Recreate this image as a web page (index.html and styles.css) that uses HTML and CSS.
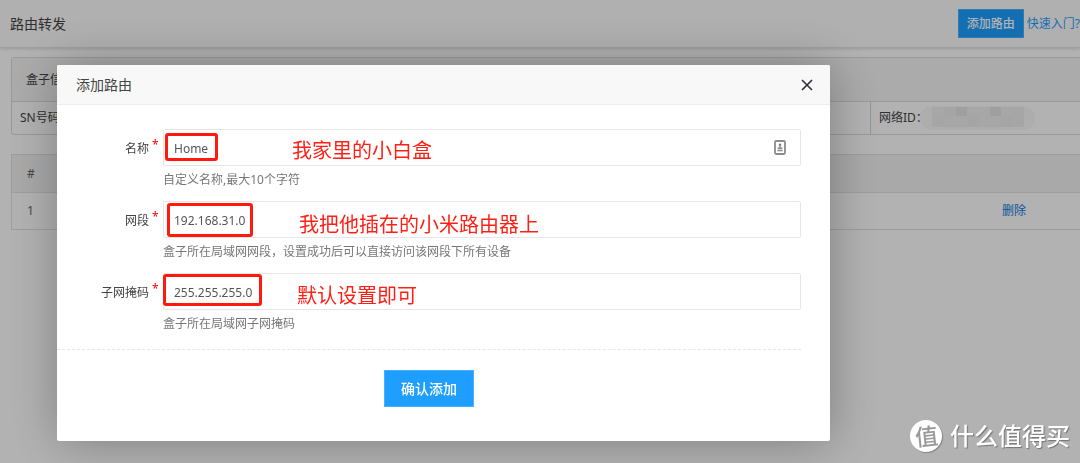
FILE: index.html
```html
<!DOCTYPE html>
<html lang="zh-CN">
<head>
<meta charset="utf-8">
<meta name="viewport" content="width=device-width, initial-scale=1">
<title>路由转发</title>
<link rel="stylesheet" href="styles.css">
</head>
<body>
<header class="topbar">
  <h1 class="topbar-title">路由转发</h1>
  <div class="topbar-actions">
    <button class="btn btn-small" type="button">添加路由</button>
    <a class="help-link" href="#">快速入门?</a>
  </div>
</header>

<main class="content">
  <section class="panel">
    <h2 class="panel-title">盒子信息</h2>
    <div class="panel-row">
      <div class="panel-cell">SN号码：</div>
      <div class="panel-cell">网络ID：
        <svg class="masked" width="115" height="26" viewBox="0 0 115 26" aria-hidden="true">
          <rect x="0" y="1" width="115" height="24" rx="12" fill="#f8f8f8"/>
          <path d="M12 2h92v20H12z" fill="#f0f0f0"/>
          <path d="M36 2h11v9H36zM70 2h11v9H70z" fill="#e4e4e4"/>
          <path d="M24 2h12v9H24zM81 11h12v11H81zM47 11h12v11H47z" fill="#ececec"/>
          <path d="M12 11h12v11H12zM93 2h11v20H93z" fill="#eeeeee"/>
        </svg>
      </div>
    </div>
  </section>

  <table class="routes">
    <thead>
      <tr><th class="col-index">#</th><th></th><th class="col-action"></th></tr>
    </thead>
    <tbody>
      <tr><td>1</td><td></td><td><a class="delete-link" href="#">删除</a></td></tr>
    </tbody>
  </table>
</main>

<div class="overlay">
  <section class="dialog" role="dialog" aria-modal="true" aria-labelledby="dialog-title">
    <header class="dialog-header">
      <h2 class="dialog-title" id="dialog-title">添加路由</h2>
      <button class="dialog-close" type="button" aria-label="关闭">
        <svg width="12" height="12" viewBox="0 0 12 12"><path d="M1 1l10 10M11 1L1 11" fill="none" stroke="#2e2d3c" stroke-width="1.6"/></svg>
      </button>
    </header>
    <form class="form">
      <div class="field">
        <label class="field-label" for="name">名称<span class="required">*</span></label>
        <div class="field-box">
          <input class="field-input" id="name" type="text" value="Home">
          <svg class="autofill" width="12" height="15" viewBox="0 0 12 15" aria-hidden="true">
            <rect x="1" y="1" width="10" height="13" rx="1.2" fill="#fff" stroke="#8c8c8c" stroke-width="1.8"/>
            <circle cx="6" cy="4.6" r="1.2" fill="#777"/>
            <path d="M6 5v2.5M3.6 8.2h4.8M3.4 10.6h5.2" stroke="#888" stroke-width="1.5"/>
          </svg>
          <span class="mark mark-name"></span>
          <span class="note note-name">我家里的小白盒</span>
        </div>
        <p class="hint">自定义名称,最大10个字符</p>
      </div>
      <div class="field">
        <label class="field-label" for="segment">网段<span class="required">*</span></label>
        <div class="field-box">
          <input class="field-input" id="segment" type="text" value="192.168.31.0">
          <span class="mark mark-segment"></span>
          <span class="note note-segment">我把他插在的小米路由器上</span>
        </div>
        <p class="hint">盒子所在局域网网段，设置成功后可以直接访问该网段下所有设备</p>
      </div>
      <div class="field">
        <label class="field-label" for="mask">子网掩码<span class="required">*</span></label>
        <div class="field-box">
          <input class="field-input" id="mask" type="text" value="255.255.255.0">
          <span class="mark mark-mask"></span>
          <span class="note note-mask">默认设置即可</span>
        </div>
        <p class="hint">盒子所在局域网子网掩码</p>
      </div>
      <div class="form-footer">
        <button class="btn" type="button">确认添加</button>
      </div>
    </form>
  </section>
</div>

<div class="watermark">
  <span class="watermark-logo"><span class="watermark-glyph">值</span></span>
  <span>什么值得买</span>
</div>
</body>
</html>
```
FILE: styles.css
```css
* { box-sizing: border-box; }

body {
  margin: 0;
  min-height: 100vh;
  overflow: hidden;
  background: #fff;
  color: #444;
  font: 12px/20px "Noto Sans", "Noto Sans CJK SC", sans-serif;
}

h1, h2, p { margin: 0; font-weight: 400; }
a { text-decoration: none; }
button, input { font: inherit; }

.topbar {
  display: flex;
  align-items: center;
  justify-content: space-between;
  height: 48px;
  padding-left: 10px;
  background: #fdfdfd;
  border-bottom: 1px solid #e4e4e4;
  box-shadow: 0 1px 3px rgba(0, 0, 0, .15);
}
.topbar-title { font-size: 14px; line-height: 20px; }
.topbar-actions { display: flex; align-items: center; gap: 3px; }
.help-link { color: #1e9fff; white-space: nowrap; }

.btn {
  height: 37px;
  padding: 0 16px;
  border: 1px solid #45b0ff;
  background: #1e9fff;
  color: #fff;
  font-size: 14px;
  font-weight: 500;
  cursor: pointer;
}
.btn-small { height: 29px; padding: 0 8px; font-size: 12px; }

.content { padding: 9px 0 0 11px; }

.panel {
  border: 1px solid #dcdcdc;
  border-right: 0;
  border-radius: 3px 0 0 3px;
}
.panel-title {
  padding: 12px 14px 11px;
  background: #f5f5f5;
  border-bottom: 1px solid #dcdcdc;
  font-size: 12px;
  line-height: 20px;
}
.panel-row {
  display: grid;
  grid-template-columns: 858fr 210fr;
  height: 32px;
}
.panel-cell {
  display: flex;
  align-items: center;
  padding-left: 8px;
  white-space: nowrap;
}
.panel-cell + .panel-cell { border-left: 1px solid #d6d6d6; }
.masked { margin-left: -8px; }

.routes {
  width: 100%;
  margin-top: 19px;
  border-collapse: collapse;
  border: 1px solid #e2e2e2;
  border-right: 0;
  color: #666;
}
.routes th, .routes td {
  height: 38px;
  padding: 0 15px;
  border-bottom: 1px solid #e2e2e2;
  text-align: left;
  font-weight: 400;
}
.routes td { height: 37px; }
.routes th { background: #f2f2f2; }
.col-index { width: 50px; }
.col-action { width: 93px; }
.delete-link { color: #0f7be0; }

.overlay {
  position: fixed;
  inset: 0;
  display: flex;
  align-items: flex-start;
  padding: 65px 250px 22px 57px;
  background: rgba(0, 0, 0, .3);
}
.dialog {
  flex: 1;
  background: #fff;
  border-radius: 2px;
  box-shadow: 1px 1px 50px rgba(0, 0, 0, .3);
}
.dialog-header {
  display: flex;
  align-items: center;
  justify-content: space-between;
  height: 40px;
  padding: 0 17px 0 19px;
  background: #f8f8f8;
  border-bottom: 1px solid #eee;
  border-radius: 2px 2px 0 0;
}
.dialog-title { font-size: 14px; line-height: 20px; }
.dialog-close {
  display: flex;
  padding: 0;
  border: 0;
  background: none;
  cursor: pointer;
}

.form { padding: 24px 29px 34px 0; }
.field {
  display: grid;
  grid-template-columns: 106px 1fr;
  grid-template-rows: 37px 35px;
}
.field-label {
  display: flex;
  align-items: center;
  justify-content: flex-end;
  padding: 2px 5px 0 0;
}
.required {
  width: 9px;
  padding: 0 0 8px 3px;
  color: #f00;
}
.field-box { position: relative; }
.field-input {
  width: 100%;
  height: 100%;
  padding: 1px 10px 0;
  border: 1px solid #e6e6e6;
  border-radius: 2px;
  background: #fff;
  color: #555;
  outline: 0;
}
.autofill { position: absolute; right: 15px; top: 11px; }
.hint {
  grid-column: 2;
  padding-top: 4px;
  color: #777;
  white-space: nowrap;
}

.mark {
  position: absolute;
  border: 3px solid #ff1a0d;
  border-radius: 3px;
  pointer-events: none;
}
.mark-name { left: 2px; top: 4px; width: 53px; height: 28px; }
.mark-segment { left: 4px; top: 2px; width: 86px; height: 34px; }
.mark-mask { left: 0; top: 1px; width: 99px; height: 32px; }

.note {
  position: absolute;
  color: #ff1f14;
  font-size: 20px;
  font-weight: 400;
  line-height: 28px;
  white-space: nowrap;
  pointer-events: none;
}
.note-name { left: 129px; top: 8px; }
.note-segment { left: 136px; top: 10px; }
.note-mask { left: 134px; top: 9px; }

.form-footer {
  padding-top: 20px;
  border-top: 1px dashed #e6e6e6;
  margin-top: 4px;
  text-align: center;
}

.watermark {
  position: fixed;
  right: 10px;
  bottom: 10px;
  display: flex;
  align-items: center;
  gap: 8px;
  color: #fff;
  font-size: 24px;
  font-weight: 500;
  line-height: 34px;
  text-shadow: 1px 1px 1px rgba(0, 0, 0, .35);
}
.watermark-logo {
  display: flex;
  align-items: center;
  justify-content: center;
  width: 32px;
  height: 32px;
  border-radius: 50%;
  background: #fff;
  box-shadow: 1px 1px 1px rgba(0, 0, 0, .25);
}
.watermark-glyph {
  color: #999;
  font-size: 23px;
  text-shadow: none;
  transform: rotate(-6deg);
}
```
